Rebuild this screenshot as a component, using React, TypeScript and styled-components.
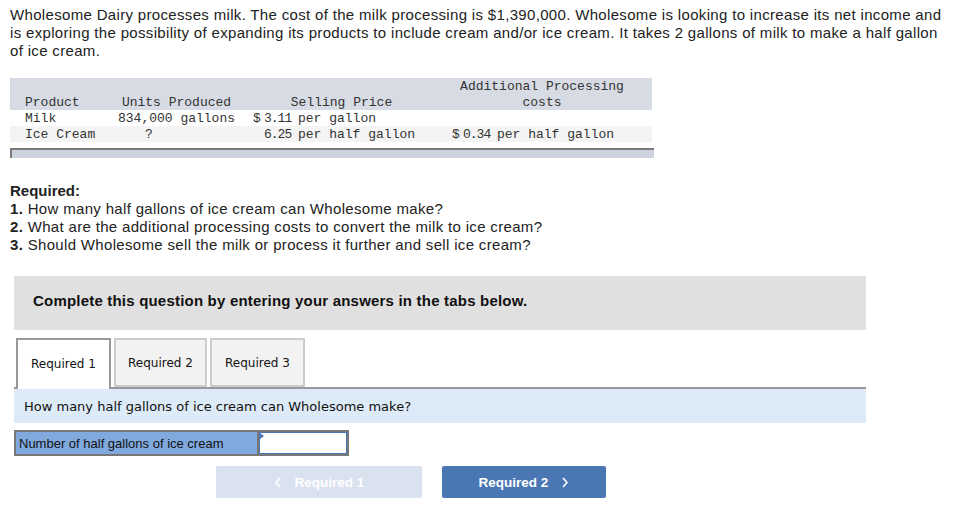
import React from "react";
import styled, { createGlobalStyle } from "styled-components";

const Global = createGlobalStyle`
  html, body { margin: 0; padding: 0; background: #fff; }
  body { font-family: "Liberation Sans", Arial, sans-serif; color: #222; }
`;

const Page = styled.div`
  padding: 6px 10px 0 10px;
  width: 968px;
  box-sizing: border-box;
`;

const Intro = styled.p`
  margin: 0;
  width: 937px;
  font-size: 15px;
  line-height: 18px;
  letter-spacing: 0.33px;
  color: #222;
`;

const Table = styled.div`
  margin-top: 18px;
  width: 642px;
  display: grid;
  grid-template-columns: 100px 133px 197px 212px;
  font-family: "Liberation Mono", "Courier New", monospace;
  font-size: 13px;
  color: #333;
`;

const Row = styled.div<{ $bg: string }>`
  display: contents;
  & > div {
    background: ${(p) => p.$bg};
  }
`;

const Cell = styled.div<{ $align?: "left" | "center"; $pl?: number; $pr?: number; $head?: boolean }>`
  text-align: ${(p) => p.$align || "left"};
  padding-left: ${(p) => p.$pl ?? 0}px;
  padding-right: ${(p) => p.$pr ?? 0}px;
  white-space: nowrap;
  ${(p) =>
    p.$head
      ? `height: 32px; display: flex; flex-direction: column; justify-content: flex-end; align-items: ${
          p.$align === "center" ? "center" : "flex-start"
        };`
      : "height: 16px; padding-top: 2px; line-height: 14px; box-sizing: border-box;"}
`;

const HeadLine = styled.span`
  display: block;
  padding-top: 2px;
  line-height: 14px;
`;

const Dollar = styled.span`
  display: inline-block;
  width: 11px;
`;

const Num = styled.span`
  letter-spacing: -1px;
`;

const Footer = styled.div`
  margin-top: 6px;
  width: 642px;
  height: 8px;
  background: #cdd3de;
  border-top: 2px solid #7a7a7a;
  border-left: 2px solid #7a7a7a;
`;

const Req = styled.div`
  margin-top: 24px;
  font-size: 15px;
  line-height: 18px;
  letter-spacing: 0.33px;
  color: #222;
`;

const ReqTitle = styled.div`
  font-weight: bold;
  letter-spacing: 0;
`;

const Notice = styled.div`
  margin: 22px 0 0 4px;
  width: 852px;
  height: 54px;
  background: #e0e0e0;
  display: flex;
  align-items: center;
  padding-left: 19px;
  padding-bottom: 6px;
  box-sizing: border-box;
  font-weight: bold;
  font-size: 15px;
  letter-spacing: 0.2px;
  color: #111;
`;

const Work = styled.div`
  margin: 8px 0 0 4px;
  width: 852px;
`;

const TabBar = styled.div`
  display: flex;
  gap: 3px;
  padding-left: 2px;
  border-bottom: 2px solid #999;
  height: 49px;
`;

const Tab = styled.div<{ $active?: boolean; $w: number }>`
  width: ${(p) => p.$w}px;
  height: ${(p) => (p.$active ? 51 : 49)}px;
  box-sizing: border-box;
  display: flex;
  align-items: center;
  justify-content: center;
  font-family: "DejaVu Sans", Verdana, sans-serif;
  font-size: 12px;
  color: #111;
  background: ${(p) => (p.$active ? "#fff" : "#f2f2f2")};
  border: 2px solid ${(p) => (p.$active ? "#999" : "#ccc")};
  border-bottom: ${(p) => (p.$active ? "none" : "2px solid #ccc")};
  padding-bottom: ${(p) => (p.$active ? 2 : 0)}px;
  position: relative;
  z-index: ${(p) => (p.$active ? 1 : 0)};
`;

const Question = styled.div`
  height: 34px;
  background: #ddebf8;
  display: flex;
  align-items: center;
  padding-left: 10px;
  font-family: "DejaVu Sans", Verdana, sans-serif;
  font-size: 13px;
  color: #111;
`;

const InputRow = styled.div`
  margin-top: 7px;
  display: flex;
  width: 335px;
  height: 26px;
  border: 2px solid #777;
  box-sizing: border-box;
  background: #777;
  gap: 2px;
`;

const Label = styled.div`
  width: 241px;
  background: #80a9de;
  display: flex;
  align-items: center;
  padding-left: 3px;
  box-sizing: border-box;
  font-size: 13px;
  color: #111;
`;

const Field = styled.div`
  flex: 1;
  background: #fff;
  border: 1px solid #4a75b5;
  position: relative;
  &::before {
    content: "";
    position: absolute;
    left: 0;
    top: 0;
    border-left: 4px solid #4a75b5;
    border-top: 3px solid transparent;
    border-bottom: 3px solid transparent;
  }
`;

const Nav = styled.div`
  margin-top: 10px;
  display: flex;
  gap: 20px;
  padding-left: 202px;
`;

const NavButton = styled.div<{ $disabled?: boolean; $w: number }>`
  width: ${(p) => p.$w}px;
  height: 32px;
  border-radius: 2px;
  background: ${(p) => (p.$disabled ? "#d9e2ee" : "#4a76b4")};
  color: #fff;
  font-weight: bold;
  font-size: 13.5px;
  display: flex;
  align-items: center;
  justify-content: center;
  gap: 13px;
`;

const Chevron = styled.svg`
  width: 8px;
  height: 11px;
`;

const Left = () => (
  <Chevron viewBox="0 0 8 11">
    <path d="M6 1 L2 5.5 L6 10" fill="none" stroke="#fff" strokeWidth="1.6" />
  </Chevron>
);
const Right = () => (
  <Chevron viewBox="0 0 8 11">
    <path d="M2 1 L6 5.5 L2 10" fill="none" stroke="#fff" strokeWidth="1.6" />
  </Chevron>
);

export default function App() {
  return (
    <Page>
      <Global />
      <Intro>
        Wholesome Dairy processes milk. The cost of the milk processing is $1,390,000. Wholesome is looking to
        increase its net income and is exploring the possibility of expanding its products to include cream and/or
        ice cream. It takes 2 gallons of milk to make a half gallon of ice cream.
      </Intro>
      <Table>
        <Row $bg="#d7dbe4">
          <Cell $head $pl={15}>
            <HeadLine>Product</HeadLine>
          </Cell>
          <Cell $head $align="center">
            <HeadLine>Units Produced</HeadLine>
          </Cell>
          <Cell $head $align="center">
            <HeadLine>Selling Price</HeadLine>
          </Cell>
          <Cell $head $align="center" $pr={8}>
            <HeadLine>Additional Processing</HeadLine>
            <HeadLine>costs</HeadLine>
          </Cell>
        </Row>
        <Row $bg="#ffffff">
          <Cell $pl={15}>Milk</Cell>
          <Cell $align="center">834,000 gallons</Cell>
          <Cell $pl={10}>
            <Dollar>$</Dollar>
            <Num>3.11 </Num>per gallon
          </Cell>
          <Cell />
        </Row>
        <Row $bg="#f4f4f4">
          <Cell $pl={15}>Ice Cream</Cell>
          <Cell $pl={35}>?</Cell>
          <Cell $pl={21}>
            <Num>6.25 </Num>per half gallon
          </Cell>
          <Cell $pl={12}>
            <Dollar>$</Dollar>
            <Num>0.34 </Num>per half gallon
          </Cell>
        </Row>
      </Table>
      <Footer />
      <Req>
        <ReqTitle>Required:</ReqTitle>
        <div>
          <b>1.</b> How many half gallons of ice cream can Wholesome make?
        </div>
        <div>
          <b>2.</b> What are the additional processing costs to convert the milk to ice cream?
        </div>
        <div>
          <b>3.</b> Should Wholesome sell the milk or process it further and sell ice cream?
        </div>
      </Req>
      <Notice>Complete this question by entering your answers in the tabs below.</Notice>
      <Work>
        <TabBar>
          <Tab $active $w={95}>Required 1</Tab>
          <Tab $w={93}>Required 2</Tab>
          <Tab $w={95}>Required 3</Tab>
        </TabBar>
        <Question>How many half gallons of ice cream can Wholesome make?</Question>
        <InputRow>
          <Label>Number of half gallons of ice cream</Label>
          <Field />
        </InputRow>
        <Nav>
          <NavButton $disabled $w={206}>
            <Left />
            Required 1
          </NavButton>
          <NavButton $w={164}>
            Required 2
            <Right />
          </NavButton>
        </Nav>
      </Work>
    </Page>
  );
}
